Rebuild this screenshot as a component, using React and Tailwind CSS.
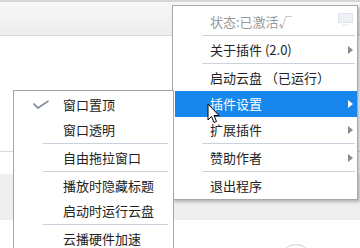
import React from "react";

const font = { fontFamily: '"Noto Sans CJK SC", "Noto Sans", sans-serif' };

// small submenu arrow
const Arrow = ({ white }) => (
  <svg width="5" height="8" viewBox="0 0 5 8" className="shrink-0">
    <path d="M0 0 L5 4 L0 8 Z" fill={white ? "#ffffff" : "#8a8a8a"} />
  </svg>
);

const MainRow = ({ label, arrow, active, disabled }) => (
  <div
    className={`h-[26px] ml-[2px] pl-[35px] pr-[4px] flex items-center justify-between text-[13px] ${
      active ? "bg-[#1787ee] text-white" : disabled ? "text-[#9a9a9a]" : "text-[#222222]"
    }`}
  >
    <span className="whitespace-pre">{label}</span>
    {arrow && <Arrow white={active} />}
  </div>
);

const MainSep = () => (
  <div className="h-[2px] pl-[29px] pr-[2px]">
    <div className="h-px bg-[#c9d3de]" />
  </div>
);

const SubRow = ({ label, checked }) => (
  <div className="h-[25px] flex items-center text-[13px] text-[#222222]">
    <div className="w-[36px] flex justify-end">
      {checked && (
        <svg width="16" height="9" viewBox="0 0 16 9" className="mr-[1px]">
          <polyline points="0.5,3.5 5,8 15.5,0.8" fill="none" stroke="#7a8694" strokeWidth="1.6" />
        </svg>
      )}
    </div>
    <span className="ml-[1px] pl-[12px]">{label}</span>
  </div>
);

const SubSep = () => (
  <div className="h-[3px] flex items-center pl-[29px] pr-[5px]">
    <div className="h-px w-full bg-[#c9d3de]" />
  </div>
);

export default function App() {
  return (
    <div className="relative w-[360px] h-[248px] overflow-hidden bg-white" style={font}>
      {/* background window */}
      <div className="h-[36px] bg-gradient-to-b from-[#f7f7f7] to-[#ededed] border-t-2 border-[#d6d6d6] border-b border-b-[#dadada]" />
      <div className="h-[116px] bg-white border-b border-[#d9d9d9]" />
      <div className="h-[22px] bg-white" />
      <div className="h-[46px] bg-[#efefef]" />
      <div className="flex pl-[280px] pt-[24px]">
        <div className="w-[32px] h-[32px] rounded-full border border-[#cfcfcf]" />
      </div>

      {/* main popup menu */}
      <div className="absolute left-[172px] top-[5px] w-[186px] bg-white border border-[#a9a9a9] shadow-[2px_2px_3px_rgba(0,0,0,0.25)] pt-[3px]">
        <div className="relative">
          <MainRow label="状态:已激活√" disabled />
          <svg width="15" height="13" viewBox="0 0 15 13" className="absolute right-[4px] top-[4px]">
            <rect x="0.5" y="0.5" width="14" height="9" fill="#eef1f6" stroke="#dfe4ec" />
            <line x1="4" y1="12" x2="11" y2="12" stroke="#dfe4ec" />
          </svg>
        </div>
        <MainSep />
        <MainRow label="关于插件 (2.0)" arrow />
        <MainSep />
        <MainRow label="启动云盘 （已运行）" />
        <MainRow label="插件设置" arrow active />
        <MainRow label="扩展插件" arrow />
        <MainSep />
        <MainRow label="赞助作者" arrow />
        <MainSep />
        <MainRow label="退出程序" />
      </div>

      {/* sub menu */}
      <div className="absolute left-[13px] top-[90px] w-[161px] h-[170px] bg-white border border-[#a6a6a6] pt-[1px] z-10">
        <SubRow label="窗口置顶" checked />
        <SubRow label="窗口透明" />
        <SubSep />
        <SubRow label="自由拖拉窗口" />
        <SubSep />
        <SubRow label="播放时隐藏标题" />
        <SubRow label="启动时运行云盘" />
        <SubSep />
        <SubRow label="云播硬件加速" />
      </div>

      {/* mouse cursor */}
      <svg width="13" height="21" viewBox="0 0 13 21" className="absolute left-[207px] top-[103px] z-20">
        <path
          d="M1 1 L1 17 L4.5 13.5 L7 19.5 L9.5 18.5 L7 12.5 L12 12.5 Z"
          fill="#ffffff"
          stroke="#000000"
          strokeWidth="1"
          strokeLinejoin="round"
        />
      </svg>
    </div>
  );
}
